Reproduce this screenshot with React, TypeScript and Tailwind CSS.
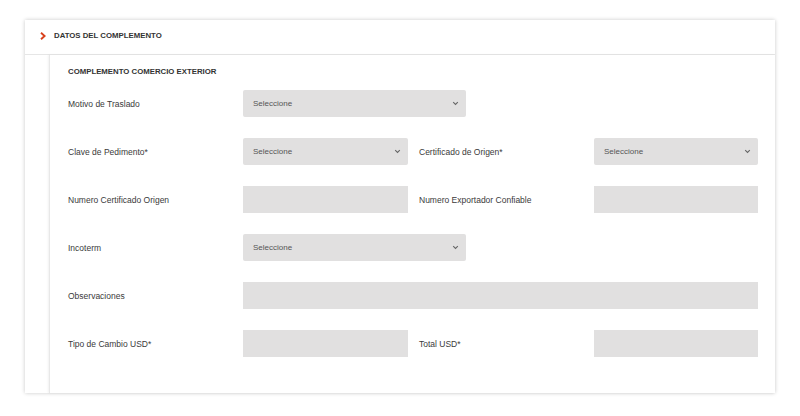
import React from 'react';

const Chevron = () => (
  <svg width="7" height="5" viewBox="0 0 7 5" className="shrink-0">
    <path d="M1.2 1.2l2.3 2.3L5.8 1.2" fill="none" stroke="#666" strokeWidth="1.1" />
  </svg>
);

const SelectBox = ({ wide, narrow }: { wide?: boolean; narrow?: boolean }) => (
  <div
    className={`${wide ? 'w-[223px]' : narrow ? 'w-[164px]' : 'w-[165px]'} h-[27px] bg-[#e1e0e0] rounded-[2px] flex items-center justify-between pl-[10px] pr-[7px] text-[8px] text-[#555]`}
  >
    <span>Seleccione</span>
    <Chevron />
  </div>
);

const InputBox = ({ full, narrow }: { full?: boolean; narrow?: boolean }) => (
  <div className={`${full ? 'w-[515px]' : narrow ? 'w-[164px]' : 'w-[165px]'} h-[27px] bg-[#e1e0e0]`} />
);

const Label = ({ children }: { children: React.ReactNode }) => (
  <div className="w-[175px] shrink-0 text-[8.5px] text-[#3a3a3a] pt-[2px]">{children}</div>
);

const App: React.FC = () => {
  return (
    <div className="w-[800px] h-[416px] bg-white pt-[20px] pl-[25px]" style={{ fontFamily: '"Liberation Sans", Arial, sans-serif' }}>
      <div className="w-[750px] h-[373px] bg-white shadow-[0_0_4px_rgba(0,0,0,0.22)] flex flex-col">
        {/* header */}
        <div className="h-[35px] shrink-0 border-b border-[#e6e6e6] flex items-center pb-[3px] pl-[15px] gap-[8px]">
          <svg width="6" height="8" viewBox="0 0 6 8">
            <path d="M1 0.8L4.6 4L1 7.2" fill="none" stroke="#d8401c" strokeWidth="1.9" />
          </svg>
          <span className="text-[7.8px] font-bold text-[#333]">DATOS DEL COMPLEMENTO</span>
        </div>

        <div className="flex flex-1">
          <div className="w-[24px] shrink-0" />
          <div className="flex-1 border-l border-[#e8e8e8] shadow-[-1px_0_2px_rgba(0,0,0,0.06)] pl-[18px] pr-[17px] pt-[11px]">
            <div className="h-[12px] flex items-center text-[7.8px] font-bold text-[#333]">
              COMPLEMENTO COMERCIO EXTERIOR
            </div>

            <div className="flex flex-col gap-[21px] mt-[12px]">
              <div className="flex items-center h-[27px]">
                <Label>Motivo de Traslado</Label>
                <SelectBox wide />
              </div>

              <div className="flex items-center h-[27px]">
                <Label>Clave de Pedimento*</Label>
                <SelectBox />
                <div className="w-[11px]" />
                <Label>Certificado de Origen*</Label>
                <SelectBox narrow />
              </div>

              <div className="flex items-center h-[27px]">
                <Label>Numero Certificado Origen</Label>
                <InputBox />
                <div className="w-[11px]" />
                <Label>Numero Exportador Confiable</Label>
                <InputBox narrow />
              </div>

              <div className="flex items-center h-[27px]">
                <Label>Incoterm</Label>
                <SelectBox wide />
              </div>

              <div className="flex items-center h-[27px]">
                <Label>Observaciones</Label>
                <InputBox full />
              </div>

              <div className="flex items-center h-[27px]">
                <Label>Tipo de Cambio USD*</Label>
                <InputBox />
                <div className="w-[11px]" />
                <Label>Total USD*</Label>
                <InputBox narrow />
              </div>
            </div>
          </div>
        </div>
      </div>
    </div>
  );
};

export default App;
